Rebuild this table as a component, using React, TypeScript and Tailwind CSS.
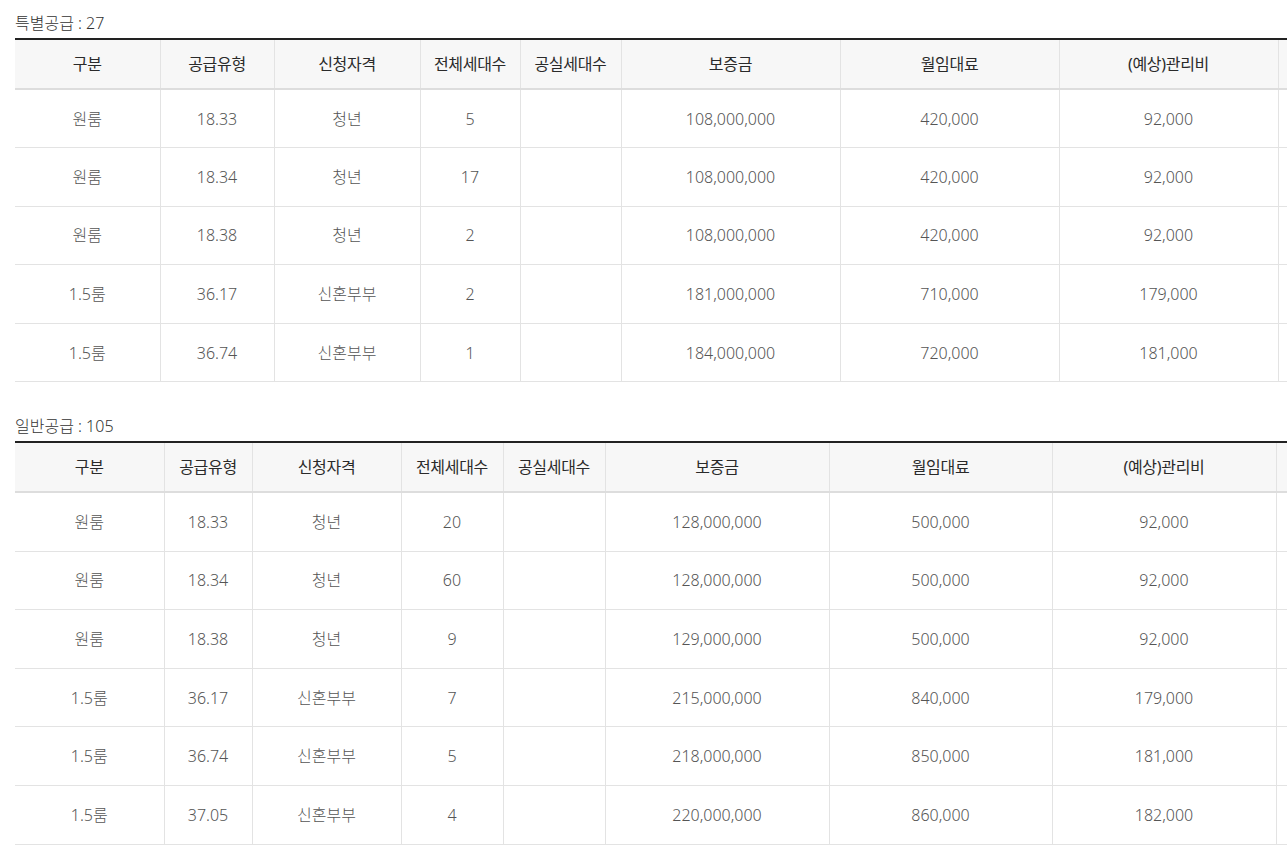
const headers = ["구분", "공급유형", "신청자격", "전체세대수", "공실세대수", "보증금", "월임대료", "(예상)관리비", ""];

type Row = [string, string, string, string, string, string, string, string];

const special: Row[] = [
  ["원룸", "18.33", "청년", "5", "", "108,000,000", "420,000", "92,000"],
  ["원룸", "18.34", "청년", "17", "", "108,000,000", "420,000", "92,000"],
  ["원룸", "18.38", "청년", "2", "", "108,000,000", "420,000", "92,000"],
  ["1.5룸", "36.17", "신혼부부", "2", "", "181,000,000", "710,000", "179,000"],
  ["1.5룸", "36.74", "신혼부부", "1", "", "184,000,000", "720,000", "181,000"],
];

const general: Row[] = [
  ["원룸", "18.33", "청년", "20", "", "128,000,000", "500,000", "92,000"],
  ["원룸", "18.34", "청년", "60", "", "128,000,000", "500,000", "92,000"],
  ["원룸", "18.38", "청년", "9", "", "129,000,000", "500,000", "92,000"],
  ["1.5룸", "36.17", "신혼부부", "7", "", "215,000,000", "840,000", "179,000"],
  ["1.5룸", "36.74", "신혼부부", "5", "", "218,000,000", "850,000", "181,000"],
  ["1.5룸", "37.05", "신혼부부", "4", "", "220,000,000", "860,000", "182,000"],
];

const SupplyTable = ({ title, rows, cols }: { title: string; rows: Row[]; cols: number[] }) => {
  return (
    <section className="pt-[11px]">
      <h2 className="text-[16px] leading-[24px] font-light text-[#333] mb-[3px]">{title}</h2>
      <table className="border-collapse table-fixed border-t-2 border-t-[#222]" style={{ width: cols.reduce((a, b) => a + b, 0) }}>
        <colgroup>
          {cols.map((w, i) => (
            <col key={i} style={{ width: w }} />
          ))}
        </colgroup>
        <thead>
          <tr className="bg-[#f7f7f7] border-b-2 border-b-[#ddd]">
            {headers.map((h, i) => (
              <th
                key={i}
                className="h-[50px] p-0 text-[16px] font-normal text-[#2a2a2a] tracking-[-0.3px] border-l border-[#e3e3e3] first:border-l-0"
              >
                {h}
              </th>
            ))}
          </tr>
        </thead>
        <tbody>
          {rows.map((r, ri) => (
            <tr key={ri} className="border-b border-[#e3e3e3]">
              {[...r, ""].map((c, ci) => (
                <td
                  key={ci}
                  className="h-[58.6px] p-0 text-center text-[16px] font-light text-[#555] border-l border-[#e3e3e3] first:border-l-0"
                >
                  {c}
                </td>
              ))}
            </tr>
          ))}
        </tbody>
      </table>
    </section>
  );
};

export default function App() {
  return (
    <div
      className="w-[1287px] h-[851px] overflow-hidden bg-white pl-[15px]"
      style={{ fontFamily: '"Noto Sans", "Noto Sans CJK KR", sans-serif' }}
    >
      <SupplyTable title="특별공급 : 27" rows={special} cols={[145, 114, 146, 100, 101, 219, 219, 219, 200]} />
      <div className="h-[21px]" />
      <SupplyTable title="일반공급 : 105" rows={general} cols={[149, 88, 149, 102, 102, 224, 223, 224, 200]} />
    </div>
  );
}
